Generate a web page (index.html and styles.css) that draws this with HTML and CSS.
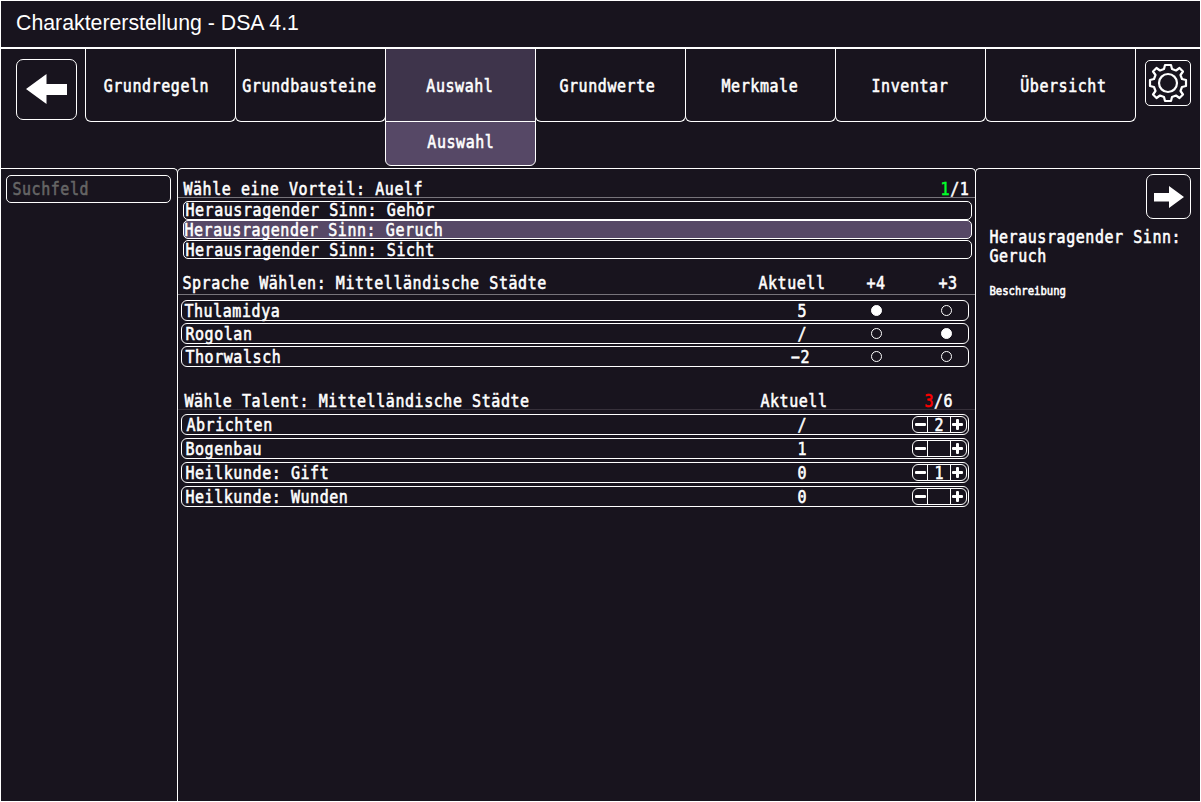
FILE: index.html
```html
<!DOCTYPE html>
<html lang="de">
<head>
<meta charset="utf-8">
<title>Charaktererstellung - DSA 4.1</title>
<link rel="stylesheet" href="styles.css">
</head>
<body>
<div class="window">
  <header class="title"><span>Charaktererstellung - DSA 4.1</span></header>
  <nav class="nav">
    <button class="back"><svg viewBox="0 0 41 30"><path d="M0 15 20.500 0V10H41V21H20.500V30Z"/></svg></button>
    <div class="tabs">
      <div class="tab"><span class="t n1">Grundregeln</span></div>
      <div class="tab"><span class="t n2">Grundbausteine</span></div>
      <div class="tab active"><span class="t n3">Auswahl</span>
        <div class="subtab"><span class="t">Auswahl</span></div>
      </div>
      <div class="tab"><span class="t n4">Grundwerte</span></div>
      <div class="tab"><span class="t n5">Merkmale</span></div>
      <div class="tab"><span class="t n6">Inventar</span></div>
      <div class="tab"><span class="t n7">Übersicht</span></div>
    </div>
    <button class="gear"><svg viewBox="-20 -20 40 40"><path d="M-3-18H3L4-14 8-12.500 11.500-15 15-11.500 12.500-8 14-4 18-3V3L14 4 12.500 8 15 11.500 11.500 15 8 12.500 4 14 3 18H-3L-4 14-8 12.500-11.500 15-15 11.500-12.500 8-14 4-18 3V-3L-14-4-12.500-8-15-11.500-11.500-15-8-12.500-4-14Z"/><circle r="9"/></svg></button>
  </nav>
  <main class="body">
    <aside class="panel left"><div class="search"><span class="t">Suchfeld</span></div></aside>
    <section class="panel center">
      <div class="head h1"><span class="t name">Wähle eine Vorteil: Auelf</span><span class="t"><span class="ok">1</span>/1</span></div>
      <div class="options">
        <div class="option first"><span class="t">Herausragender Sinn: Gehör</span></div>
        <div class="option selected"><span class="t">Herausragender Sinn: Geruch</span></div>
        <div class="option third"><span class="t">Herausragender Sinn: Sicht</span></div>
      </div>
      <div class="head h2"><span class="t name">Sprache Wählen: Mittelländische Städte</span><span class="t now">Aktuell</span><span class="t four">+4</span><span class="t three">+3</span></div>
      <div class="rows langs">
        <div class="row"><span class="t name">Thulamidya</span><span class="t val">5</span><i class="dot on"></i><i class="dot"></i></div>
        <div class="row shift"><span class="t name">Rogolan</span><span class="t val">/</span><i class="dot"></i><i class="dot on"></i></div>
        <div class="row shift"><span class="t name">Thorwalsch</span><span class="t val neg">−2</span><i class="dot"></i><i class="dot"></i></div>
      </div>
      <div class="head h3"><span class="t name">Wähle Talent: Mittelländische Städte</span><span class="t now">Aktuell</span><span class="t count"><span class="bad">3</span>/6</span></div>
      <div class="rows talents">
        <div class="row shift"><span class="t name">Abrichten</span><span class="t val">/</span><div class="stepper"><b class="minus"></b><span class="num"><span class="t">2</span></span><b class="plus"></b></div></div>
        <div class="row"><span class="t name">Bogenbau</span><span class="t val">1</span><div class="stepper"><b class="minus"></b><span class="num"></span><b class="plus"></b></div></div>
        <div class="row"><span class="t name">Heilkunde: Gift</span><span class="t val">0</span><div class="stepper"><b class="minus"></b><span class="num"><span class="t">1</span></span><b class="plus"></b></div></div>
        <div class="row"><span class="t name">Heilkunde: Wunden</span><span class="t val">0</span><div class="stepper"><b class="minus"></b><span class="num"></span><b class="plus"></b></div></div>
      </div>
    </section>
    <aside class="panel right">
      <button class="next"><svg viewBox="0 0 30 22"><path d="M30 11 15 0V7H0V15.500H15V22Z"/></svg></button>
      <h2 class="t">Herausragender Sinn:<br>Geruch</h2>
      <p class="t">Beschreibung</p>
    </aside>
  </main>
</div>
</body>
</html>
```
FILE: styles.css
```css
* { box-sizing: border-box; }
body { margin: 0; background: #18141e; color: #fff; }
.window {
  width: 1201px; height: 802px; overflow: hidden;
  display: flex; flex-direction: column;
  border: 1px solid #fff;
  background: #18141e;
}
button { padding: 0; background: none; border: 1px solid #fff; display: flex; align-items: center; justify-content: center; }
.t {
  display: inline-block;
  font: 400 15px/18px "DejaVu Sans Mono", monospace;
  letter-spacing: 0.56px;
  white-space: pre;
  transform: translate(0.4px, 0.6px) scaleY(1.16);
  -webkit-text-stroke: 0.5px currentColor;
}
.t .ok, .t .bad { -webkit-text-stroke-color: currentColor; }
.title {
  height: 48px; flex: none; padding: 9px 0 0 15px;
  border-bottom: 2px solid #fff;
  font: 21.3px/26px "Liberation Sans", sans-serif;
}
.nav { height: 119px; flex: none; display: flex; align-items: flex-start; }
.back { width: 61px; height: 61px; margin: 10px 8px 0 15px; border-radius: 7px; }
.back svg { width: 41px; height: 30px; fill: #fff; position: relative; top: -0.5px; }
.tabs { display: flex; width: 1051px; }
.tab {
  position: relative; width: 151px; height: 73px; margin-right: -1px; flex: none;
  display: flex; justify-content: center; padding-top: 30px;
  border: 1px solid #fff; border-top: 0; border-radius: 0 0 6px 6px;
}
.tab.active { background: #3e344b; border-radius: 0; z-index: 1; }
.subtab {
  position: absolute; left: -1px; top: 72px; width: 151px; height: 45px;
  padding: 11px 0 0; text-align: center;
  background: #564866; border: 1px solid #fff; border-radius: 0 0 6px 6px;
}
.n1 { margin-right: 9px; }
.n2 { margin-right: 3px; }
.n3 { margin-right: 2px; }
.n4 { margin-right: 7px; }
.n5, .n6 { margin-right: 2px; }
.n7 { margin-left: 5px; }
.gear { width: 46px; height: 46px; margin: 11px 0 0 9px; border-radius: 5px; }
.gear svg { width: 40px; height: 40px; fill: none; stroke: #fff; stroke-width: 2.2; stroke-linejoin: round; }
.body { flex: 1; display: flex; min-height: 0; }
.panel { border-top: 1px solid #fff; flex: none; }
.left { width: 177px; border-right: 1px solid #fff; border-top-right-radius: 5px; padding: 6px 0 0 5px; }
.search { width: 165px; height: 28px; border: 1px solid #fff; border-radius: 5px; padding: 4px 5px; color: #666; }
.search { border-color: #fff; }
.center { width: 799px; margin-left: -1px; border-left: 1px solid #fff; border-right: 1px solid #fff; border-radius: 5px 5px 0 0; }
.head { display: flex; border-bottom: 1px solid #77747b; }
.h1 { height: 29px; padding: 11px 6px 0 5px; justify-content: space-between; }
.h2 { height: 35px; padding: 14px 0 0 4px; }
.h3 { height: 43px; padding: 25px 0 0 6px; border-bottom-color: #37313b; }
.h2 .name { width: 576px; }
.h3 .name { width: 576px; }
.now { width: 108px; }
.four { width: 72px; }
.count { margin-left: 56px; }
.ok { color: #00ff2a; }
.bad { color: #f00; }
.options { padding: 3px 3px 0 5px; height: 62px; }
.option { height: 19px; border: 1px solid #fff; border-radius: 5px; padding-left: 1px; display: flex; align-items: center; }
.option.selected { background: #564866; padding-left: 0; }
.option.third { margin-top: 1px; }
.option .t { transform: translate(0.4px, 0.2px) scaleY(1.16); }
.option.first .t { transform: translate(0.4px, -0.6px) scaleY(1.16); }
.rows { padding: 0 6px 0 3px; display: flex; flex-direction: column; }
.langs { padding-top: 5px; gap: 2px; }
.talents { padding-top: 4px; gap: 3px; }
.row {
  position: relative; height: 21px; border: 1px solid #fff; border-radius: 6px;
  display: grid; grid-template-columns: 587px 60px 1fr; align-items: center; padding-left: 3px;
}
.shift { padding-left: 4px; grid-template-columns: 586px 60px 1fr; }
.langs .row { grid-template-columns: 588px 60px 54px 70px 1fr; padding-left: 2px; }
.langs .shift .name { padding-left: 1px; }
.val { text-align: center; }
.neg { padding-right: 4px; }
.dot { width: 11px; height: 11px; border: 1px solid #fff; border-radius: 50%; justify-self: start; }
.langs .dot { margin-left: 39px; }
.langs .dot + .dot { margin-left: 55px; }
.dot.on { background: #fff; }
.stepper { width: 55px; height: 17px; border: 1px solid #fff; border-radius: 6px; justify-self: end; margin-right: 1px; display: grid; grid-template-columns: 14px 24px 15px; }
.num { border: solid #fff; border-width: 0 1px; display: flex; align-items: center; justify-content: center; height: 15px; }
.minus, .plus { position: relative; align-self: center; justify-self: start; width: 11px; height: 11px; margin-left: 1px; }
.minus { margin-left: 2px; }
.minus::before, .plus::before { content: ""; position: absolute; left: 0; top: 4px; width: 11px; height: 3px; border-radius: 1px; background: #fff; }
.plus::after { content: ""; position: absolute; left: 4px; top: 0; width: 3px; height: 11px; border-radius: 1px; background: #fff; }
.right { flex: 1; margin-left: -1px; border-left: 1px solid #fff; border-top-left-radius: 5px; padding: 5px 9px 0 13px; display: flex; flex-direction: column; align-items: flex-start; }
.next { width: 45px; height: 45px; border-radius: 7px; align-self: flex-end; }
.next svg { width: 30px; height: 22px; fill: #fff; }
h2.t { margin: 11px 0 0; line-height: 16.4px; }
p.t { margin: 20px 0 0; font-size: 10.6px; line-height: 14px; letter-spacing: 0; }
```
